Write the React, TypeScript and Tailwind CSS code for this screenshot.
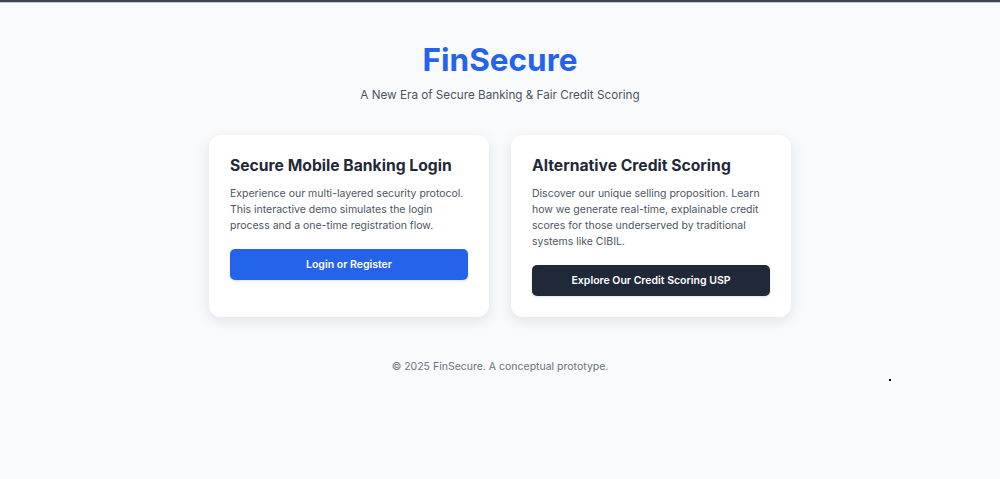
import React from 'react';

const Card = ({ title, body, button, dark }: { title: string; body: string; button: string; dark?: boolean }) => (
  <div className="w-[280px] rounded-xl bg-white p-[21px] shadow-[0_4px_14px_rgba(15,23,42,0.10)]">
    <h2 className="text-[15.7px] font-bold leading-[20px] text-[#1f2937]">{title}</h2>
    <p className="mt-[10px] text-[10.5px] leading-[16px] text-[#4b5563]">{body}</p>
    <button
      className={`mt-[15px] h-[31px] w-full rounded-[5px] text-[10.5px] font-semibold text-white shadow-sm ${
        dark ? 'bg-[#1f2937]' : 'bg-[#2563eb]'
      }`}
    >
      {button}
    </button>
  </div>
);

export default function App() {
  return (
    <div className="relative min-h-[479px] bg-[#f8fafc] font-['Inter','Liberation_Sans',sans-serif]">
      <div className="h-[2px] bg-[#3b4453]" />
      <div className="h-px bg-[#c9ced6]" />
      <main className="flex flex-col items-center pt-[39px]">
        <h1 className="text-[31.5px] font-bold leading-[36px] text-[#2563eb]">FinSecure</h1>
        <p className="mt-[9px] text-[11.7px] leading-[16px] text-[#4b5563]">
          A New Era of Secure Banking &amp; Fair Credit Scoring
        </p>
        <div className="mt-[32px] flex gap-[22px]">
          <Card
            title="Secure Mobile Banking Login"
            body="Experience our multi-layered security protocol. This interactive demo simulates the login process and a one-time registration flow."
            button="Login or Register"
          />
          <Card
            title="Alternative Credit Scoring"
            body="Discover our unique selling proposition. Learn how we generate real-time, explainable credit scores for those underserved by traditional systems like CIBIL."
            button="Explore Our Credit Scoring USP"
            dark
          />
        </div>
        <footer className="mt-[42px] text-[10.5px] leading-[16px] text-[#6b7280]">
          © 2025 FinSecure. A conceptual prototype.
        </footer>
      </main>
      <div className="absolute left-[889px] top-[379px] h-[2px] w-[2px] bg-black" />
    </div>
  );
}
